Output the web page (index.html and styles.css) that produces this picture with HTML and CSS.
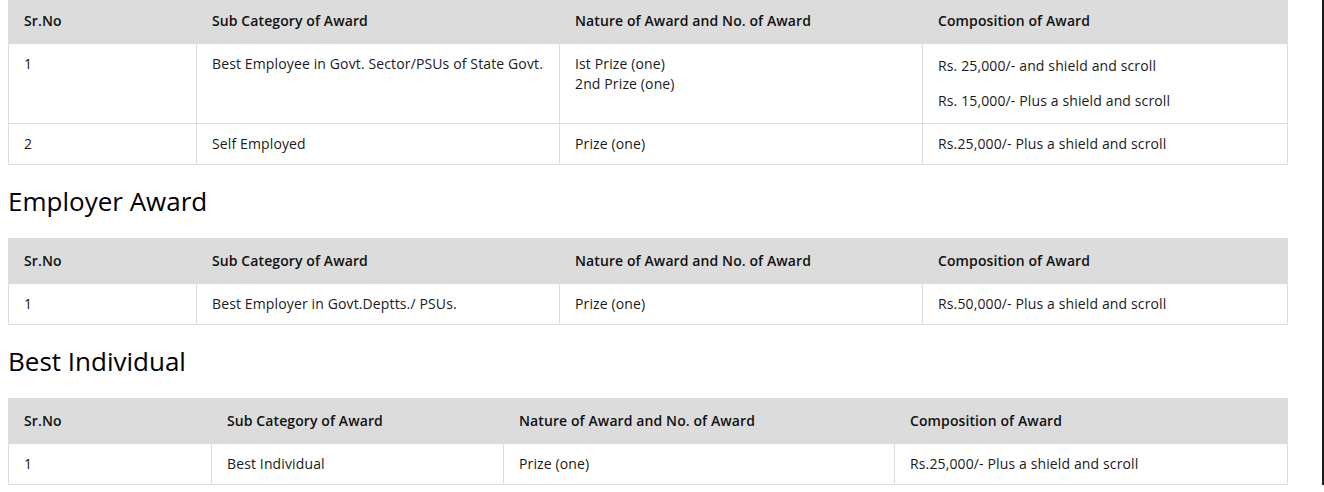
FILE: index.html
```html
<!DOCTYPE html>
<html lang="en">
<head>
<meta charset="utf-8">
<title>Awards</title>
<link rel="stylesheet" href="styles.css">
</head>
<body>
<div class="page">
  <table class="awards awards-first">
    <colgroup>
      <col class="c1"><col class="c2"><col class="c3"><col class="c4">
    </colgroup>
    <thead>
      <tr><th>Sr.No</th><th>Sub Category of Award</th><th>Nature of Award and No. of Award</th><th>Composition of Award</th></tr>
    </thead>
    <tbody>
      <tr class="tall">
        <td>1</td>
        <td>Best Employee in Govt. Sector/PSUs of State Govt.</td>
        <td>Ist Prize (one)<br>2nd Prize (one)</td>
        <td><p class="para">Rs. 25,000/- and shield and scroll</p><p class="para">Rs. 15,000/- Plus a shield and scroll</p></td>
      </tr>
      <tr>
        <td>2</td>
        <td>Self Employed</td>
        <td>Prize (one)</td>
        <td>Rs.25,000/- Plus a shield and scroll</td>
      </tr>
    </tbody>
  </table>

  <h3 class="section-title">Employer Award</h3>
  <table class="awards">
    <colgroup>
      <col class="c1"><col class="c2"><col class="c3"><col class="c4">
    </colgroup>
    <thead>
      <tr><th>Sr.No</th><th>Sub Category of Award</th><th>Nature of Award and No. of Award</th><th>Composition of Award</th></tr>
    </thead>
    <tbody>
      <tr>
        <td>1</td>
        <td>Best Employer in Govt.Deptts./ PSUs.</td>
        <td>Prize (one)</td>
        <td>Rs.50,000/- Plus a shield and scroll</td>
      </tr>
    </tbody>
  </table>

  <h3 class="section-title">Best Individual</h3>
  <table class="awards">
    <colgroup>
      <col class="d1"><col class="d2"><col class="d3"><col class="d4">
    </colgroup>
    <thead>
      <tr><th>Sr.No</th><th>Sub Category of Award</th><th>Nature of Award and No. of Award</th><th>Composition of Award</th></tr>
    </thead>
    <tbody>
      <tr>
        <td>1</td>
        <td>Best Individual</td>
        <td>Prize (one)</td>
        <td>Rs.25,000/- Plus a shield and scroll</td>
      </tr>
    </tbody>
  </table>
</div>
</body>
</html>
```

FILE: styles.css
```css
html {
  border-right: 2px solid #1e1e1e;
  background: #fff;
}
body {
  margin: 0;
  font-family: "Open Sans", "Liberation Sans", sans-serif;
  color: #222;
  overflow: hidden;
}
.page {
  padding: 0 0 0 8px;
}
.awards {
  width: 1279px;
  border-collapse: collapse;
  table-layout: fixed;
  font-size: 14px;
  line-height: 20px;
  letter-spacing: 0.13px;
}
.awards-first {
  margin-top: -2px;
}
.c1 { width: 188px; }
.c2 { width: 363px; }
.c3 { width: 363px; }
.c4 { width: 365px; }
.d1 { width: 203px; }
.d2 { width: 292px; }
.d3 { width: 391px; }
.d4 { width: 393px; }
.awards th {
  background: #dcdcdc;
  border: 1px solid #dcdcdc;
  text-align: left;
  font-weight: 600;
  color: #111;
  padding: 12px 15px;
  letter-spacing: 0.1px;
}
.awards td {
  border: 1px solid #dedede;
  padding: 10px 15px;
  vertical-align: top;
  color: #1a1a1a;
}
.para {
  margin: 0 0 11px;
  line-height: 24px;
}
.para:last-child {
  margin-bottom: 0;
}
.section-title {
  font-size: 26px;
  line-height: 32px;
  font-weight: 400;
  color: #000;
  margin: 20px 0 21px;
}
```
